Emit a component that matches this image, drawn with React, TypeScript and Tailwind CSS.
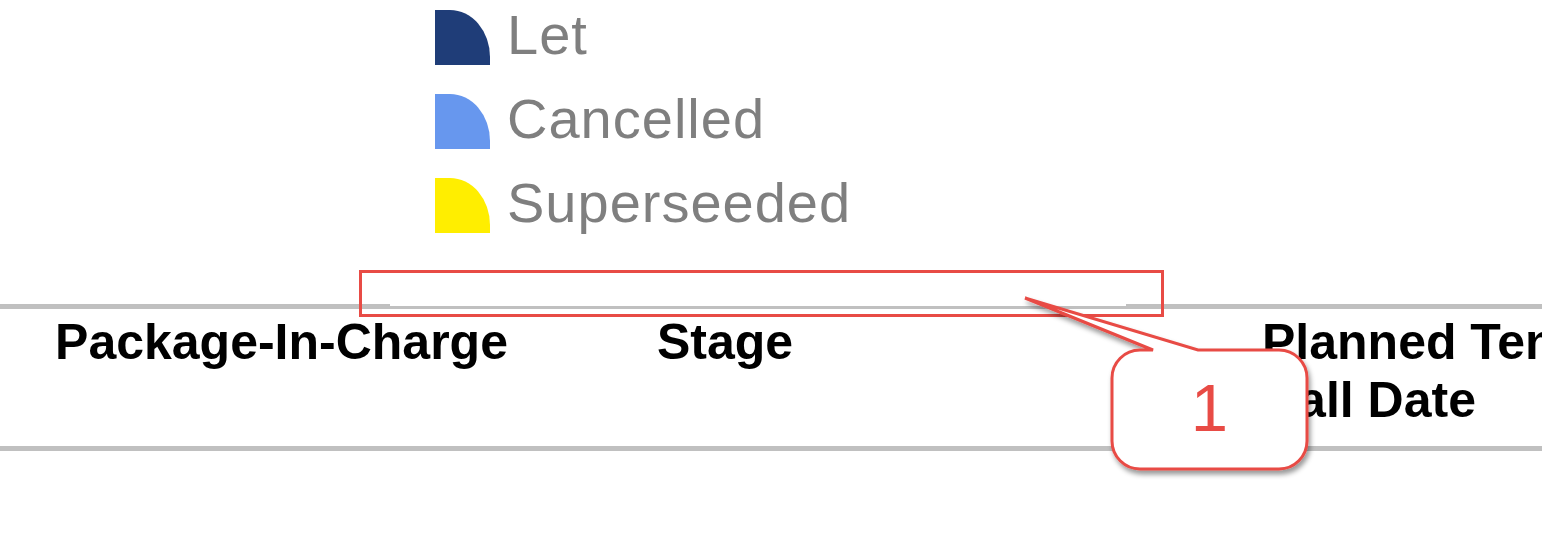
import React from "react";

const legend = [
  { label: "Let", color: "bg-[#1f3d78]" },
  { label: "Cancelled", color: "bg-[#6797ee]" },
  { label: "Superseeded", color: "bg-[#ffee00]" },
];

function Legend() {
  return (
    <div className="flex flex-col gap-[29px] pt-[10px] pl-[435px]">
      {legend.map((item) => (
        <div key={item.label} className="flex items-start gap-[17px] h-[55px]">
          <div className={`w-[55px] h-[55px] rounded-tr-[40px_47px] ${item.color}`} />
          <span className="text-[56px] leading-[49px] tracking-[1px] text-[#7f7f7f]">
            {item.label}
          </span>
        </div>
      ))}
    </div>
  );
}

function HeaderRow() {
  return (
    <div className="mt-[71px]">
      {/* top rule: thinner through the middle */}
      <div className="flex items-end h-[5px]">
        <div className="w-[390px] h-[5px] bg-[#c0c0c0]" />
        <div className="w-[736px] h-[3px] bg-[#c0c0c0]" />
        <div className="flex-1 h-[5px] bg-[#c0c0c0]" />
      </div>
      <div className="grid grid-cols-[563px_324px_375px_400px] pt-[4px] pb-[17px] text-[50px] leading-[58px] font-bold text-black">
        <div className="text-center">Package-In-Charge</div>
        <div className="text-center">Stage</div>
        <div />
        <div className="text-left">Planned Tender Call Date</div>
      </div>
      <div className="h-[5px] bg-[#c0c0c0]" />
    </div>
  );
}

function Callout() {
  return (
    <>
      <div className="absolute left-[359px] top-[270px] w-[805px] h-[47px] border-[3px] border-[#e84b45]" />
      <svg
        className="absolute left-[1000px] top-[285px]"
        width="320"
        height="210"
        viewBox="0 0 320 210"
      >
        <defs>
          <filter id="sh" x="-20%" y="-20%" width="140%" height="140%">
            <feDropShadow dx="2" dy="4" stdDeviation="2.5" floodColor="#000" floodOpacity="0.4" />
          </filter>
        </defs>
        <path
          d="M140 65 L153 65 L25 13 L198 65 L279 65 A28 28 0 0 1 307 93 L307 156 A28 28 0 0 1 279 184 L140 184 A28 28 0 0 1 112 156 L112 93 A28 28 0 0 1 140 65 Z"
          fill="#ffffff"
          stroke="#e84b45"
          strokeWidth="3"
          strokeLinejoin="miter"
          filter="url(#sh)"
        />
      </svg>
      <div className="absolute left-[1112px] top-[348px] w-[195px] h-[119px] flex items-center justify-center text-[67px] leading-none text-[#e84b45]">
        1
      </div>
    </>
  );
}

export default function App() {
  return (
    <div className="relative w-[1542px] h-[556px] overflow-hidden bg-white font-['Liberation_Sans',Arial,sans-serif]">
      <Legend />
      <HeaderRow />
      <Callout />
    </div>
  );
}
